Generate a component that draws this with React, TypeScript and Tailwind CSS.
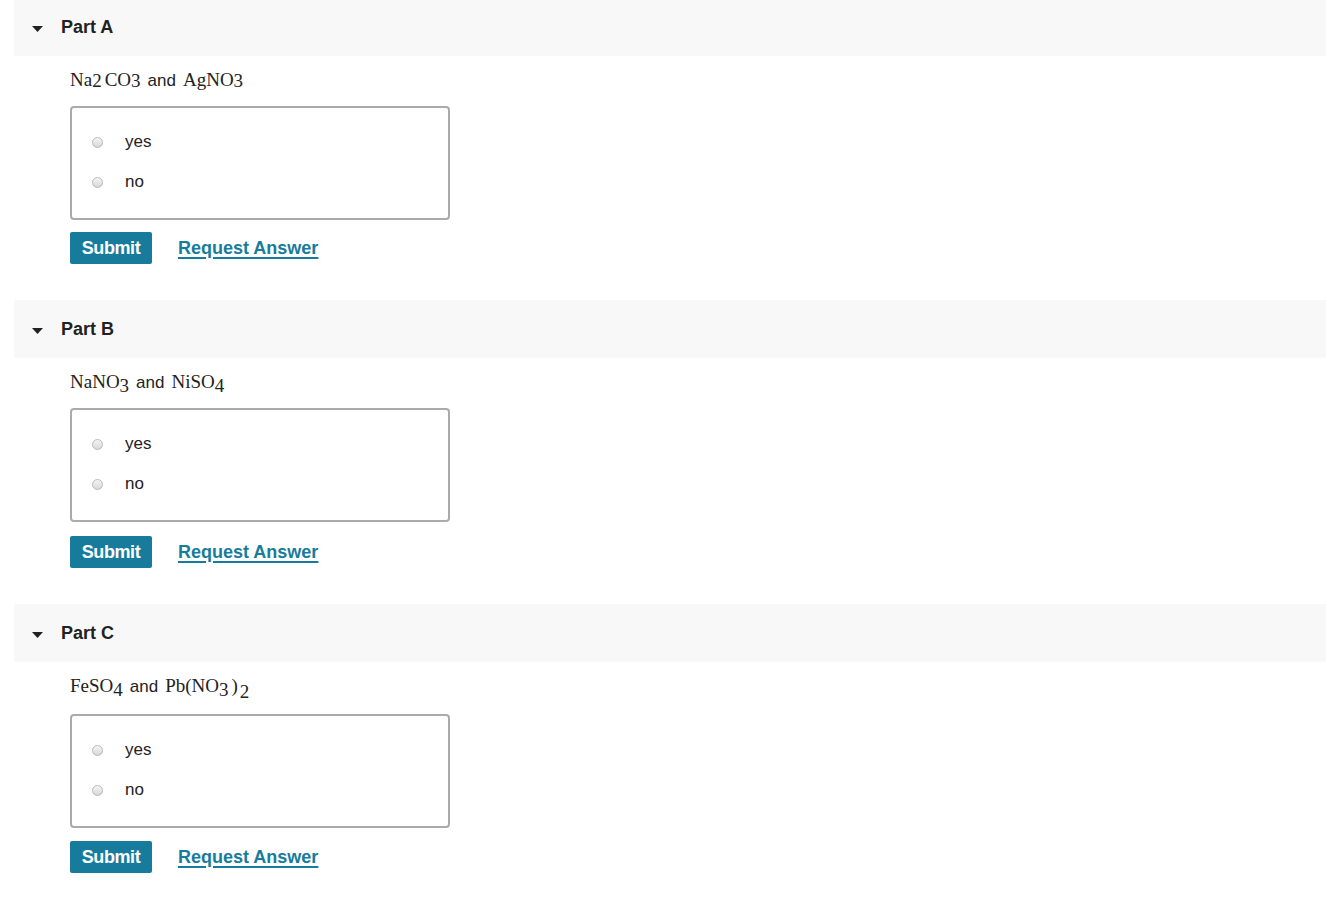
import React from "react";

type Part = {
  label: string;
  formula: React.ReactNode;
  formulaGap: string;
  buttonGap: string;
};

const serif = "font-['Liberation_Serif','DejaVu_Serif',serif] text-[19px]";

function Sub({ children, low = true }: { children: React.ReactNode; low?: boolean }) {
  return (
    <span className={low ? "relative top-[4px] text-[19px]" : "relative top-[1px] text-[19px]"}>{children}</span>
  );
}

const parts: Part[] = [
  {
    label: "Part A",
    formulaGap: "mt-[16px]",
    buttonGap: "mt-[12px]",
    formula: (
      <>
        <span className={serif}>
          Na<Sub low={false}>2</Sub>
          <span className="ml-[3px]">CO</span>
          <Sub low={false}>3</Sub>
        </span>
        <span className="mx-[7px]">and</span>
        <span className={serif}>
          AgNO<Sub low={false}>3</Sub>
        </span>
      </>
    ),
  },
  {
    label: "Part B",
    formulaGap: "mt-[16px]",
    buttonGap: "mt-[14px]",
    formula: (
      <>
        <span className={serif}>
          NaNO<Sub>3</Sub>
        </span>
        <span className="mx-[7px]">and</span>
        <span className={serif}>
          NiSO<Sub>4</Sub>
        </span>
      </>
    ),
  },
  {
    label: "Part C",
    formulaGap: "mt-[18px]",
    buttonGap: "mt-[13px]",
    formula: (
      <>
        <span className={serif}>
          FeSO<Sub>4</Sub>
        </span>
        <span className="mx-[7px]">and</span>
        <span className={serif}>
          Pb(NO<Sub>3</Sub>
          <span className="ml-[3px]">)</span>
          <span className="relative top-[6px] ml-[2px]">2</span>
        </span>
      </>
    ),
  },
];

function Radio({ label }: { label: string }) {
  return (
    <label className="flex h-10 items-center">
      <span className="h-[11px] w-[11px] rounded-full border border-[#b9b9b9] bg-gradient-to-b from-[#f4f4f4] to-[#d9d9d9]" />
      <span className="ml-[22px] text-[17px] text-[#222]">{label}</span>
    </label>
  );
}

function Section({ part, first }: { part: Part; first: boolean }) {
  return (
    <section className={first ? "mt-[-2px]" : ""}>
      <div className="ml-[14px] flex h-[58px] items-center bg-[#f8f8f8]">
        <svg width="11" height="6" viewBox="0 0 11 6" className="ml-[18px] mt-[4px]">
          <path d="M0 0 H11 L5.5 6 Z" fill="#222" />
        </svg>
        <span className="ml-[18px] text-[18px] font-bold text-[#222]">{part.label}</span>
      </div>
      <div className="pl-[70px]">
        <div className="mt-[14px] flex h-5 items-center text-[17px] leading-5 text-[#222] [&_span]:leading-5">
          <div>{part.formula}</div>
        </div>
        <div
          className={`${part.formulaGap} h-[114px] w-[380px] rounded-[4px] border-2 border-[#aaaaaa] pl-[20px] pt-[14px]`}
        >
          <Radio label="yes" />
          <Radio label="no" />
        </div>
        <div className={`${part.buttonGap} flex items-center pb-[36px]`}>
          <button className="h-8 w-[82px] rounded-[2px] bg-[#177c9c] text-[18px] font-bold tracking-[-0.4px] text-white">
            Submit
          </button>
          <a className="ml-[26px] text-[18px] font-bold text-[#177c9c] underline decoration-[2px] underline-offset-[3px]">
            Request Answer
          </a>
        </div>
      </div>
    </section>
  );
}

export default function App() {
  return (
    <div className="min-h-[908px] w-[1326px] bg-white font-['Liberation_Sans',Arial,sans-serif]">
      {parts.map((p, i) => (
        <Section key={p.label} part={p} first={i === 0} />
      ))}
    </div>
  );
}
